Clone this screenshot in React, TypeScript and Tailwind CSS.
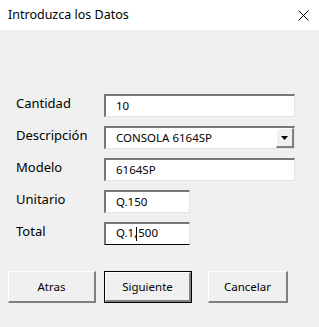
import React from 'react';

const font = { fontFamily: '"Noto Sans", "Open Sans", Arial, sans-serif' };

const Field: React.FC<{ value: React.ReactNode; wide?: boolean; dropdown?: boolean; focused?: boolean }> = ({ value, wide, dropdown, focused }) => (
  <div
    className={`relative flex h-[23px] items-center bg-white border-t-2 border-l-2 border-t-[#767676] border-l-[#767676] border-r border-r-[#e3e3e3] ${focused ? 'border-b border-b-black' : 'border-b border-b-[#e3e3e3]'} ${wide ? 'w-[191px]' : 'w-[86px]'}`}
  >
    <span className="pl-[10px] text-[11.5px] leading-none text-black whitespace-nowrap">{value}</span>
    {dropdown && (
      <div className="absolute right-0 top-0 flex h-full w-[18px] items-center justify-center bg-[#f0f0f0] border-t border-l border-t-white border-l-white border-b-2 border-r-2 border-b-[#808080] border-r-[#808080]">
        <svg width="7" height="4" viewBox="0 0 7 4">
          <path d="M0 0h7L3.5 4z" fill="#000" />
        </svg>
      </div>
    )}
  </div>
);

const Row: React.FC<{ label: string; children: React.ReactNode }> = ({ label, children }) => (
  <div className="flex items-start">
    <div className="w-[88px] pt-[1px] text-[13px] leading-[16px] text-black">{label}</div>
    {children}
  </div>
);

const Button: React.FC<{ label: string; width: string; isDefault?: boolean }> = ({ label, width, isDefault }) => (
  <div className={`${width} h-[32px] ${isDefault ? 'border border-black' : ''}`}>
    <div className="flex h-full w-full items-center justify-center bg-[#f0f0f0] border-t border-l border-t-white border-l-white border-b-2 border-r-2 border-b-[#808080] border-r-[#808080] text-[11.5px] text-black">
      {label}
    </div>
  </div>
);

export default function App() {
  return (
    <div className="w-[319px] h-[327px] bg-[#f0f0f0] overflow-hidden" style={font}>
      {/* Title bar */}
      <div className="flex h-[30px] items-center justify-between bg-white pl-[8px] pr-[9px]">
        <span className="text-[12.5px] text-black">Introduzca los Datos</span>
        <svg width="11" height="11" viewBox="0 0 11 11" className="mr-[1px]">
          <path d="M0.5 0.5L10.5 10.5M10.5 0.5L0.5 10.5" stroke="#000" strokeWidth="1" />
        </svg>
      </div>

      {/* Form */}
      <div className="flex flex-col gap-[9px] pl-[16px] pt-[64px]">
        <Row label="Cantidad">
          <Field wide value="10" />
        </Row>
        <Row label="Descripción">
          <Field wide dropdown value="CONSOLA 6164SP" />
        </Row>
        <Row label="Modelo">
          <Field wide value="6164SP" />
        </Row>
        <Row label="Unitario">
          <Field value="Q.150" />
        </Row>
        <Row label="Total">
          <Field
            focused
            value={
              <>
                Q.1,<span className="inline-block h-[14px] w-px -ml-px mr-px align-middle bg-black" />500
              </>
            }
          />
        </Row>
      </div>

      {/* Buttons */}
      <div className="flex pl-[8px] pt-[26px]">
        <Button label="Atras" width="w-[88px]" />
        <div className="ml-[8px]">
          <Button label="Siguiente" width="w-[88px]" isDefault />
        </div>
        <div className="ml-[16px]">
          <Button label="Cancelar" width="w-[80px]" />
        </div>
      </div>
    </div>
  );
}
